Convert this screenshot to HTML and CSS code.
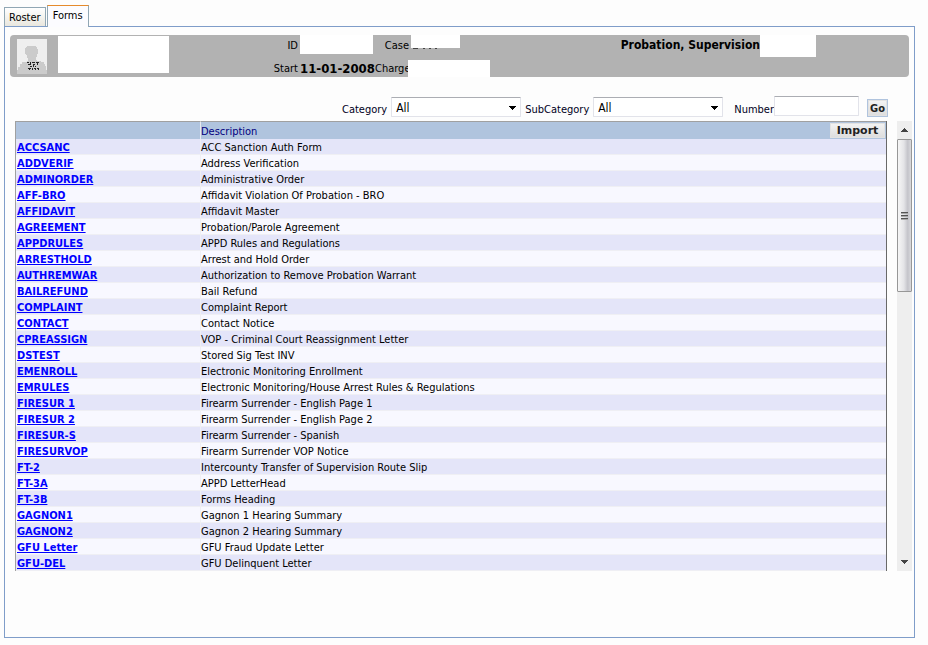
FILE: index.html
```
<!DOCTYPE html>
<html lang="en">

<head>
    <meta charset="utf-8">
    <title>Forms</title>
    <link rel="stylesheet" href="styles.css">
</head>

<body>
    <nav class="tabs">
        <a class="tab" href="#roster">Roster</a>
        <a class="tab active" href="#forms">Forms</a>
    </nav>
    <main class="panel">
        <header class="person">
            <svg class="photo" width="30" height="35" viewBox="0 0 30 35" shape-rendering="crispEdges">
                <rect width="30" height="35" fill="#efefef"/>
                <path d="M10 7h9v1h1v2h1v5h-1v3h-1v3h1v1h4v1h3v2h1v2h1v4h1v4H0v-4h1v-3h2v-3h2v-2h5v-1h1v-3h-1v-3H9v-1H8V9h1V8h1z" fill="#cbcbcb"/>
                <path d="M10 23h2v1h-2zM13 23h1v2h-1zM15 23h3v1h-3zM19 23h3v1h-3zM11 25h3v1h-3zM16 25h2v1h-2zM20 24h1v2h-1zM13 27h2v1h-2zM16 26h1v2h-1zM18 27h1v1h-1zM11 29h3v1h-3zM15 29h1v2h-1zM17 29h2v1h-2zM20 29h2v1h-2zM12 30h1v1h-1zM18 30h1v1h-1zM21 30h1v1h-1z" fill="#222"/>
            </svg>
            <div class="name"></div>
            <div class="info">
                <span class="label">ID</span>
                <span class="blank id-value"></span>
                <span class="label">Case</span>
                <span class="case-value">
                    <span class="blank case-blank"></span>
                    <svg width="30" height="2" viewBox="0 0 30 2" shape-rendering="crispEdges">
                        <path d="M2 0h5v1h-5zM12 0h2v1h-2zM18 0h2v1h-2zM24 0h2v1h-2z" fill="#444"/>
                    </svg>
                </span>
                <span class="label">Start</span>
                <strong class="date">11-01-2008</strong>
                <span class="label">Charge</span>
                <span class="blank charge-value"></span>
            </div>
            <div class="program">
                <strong>Probation, Supervision</strong>
                <span class="blank program-value"></span>
            </div>
        </header>

        <form class="filters">
            <label for="category">Category</label>
            <span class="select">
                <select id="category"><option>All</option></select>
                <svg width="7" height="4" viewBox="0 0 7 4" shape-rendering="crispEdges"><path d="M0 0h7v1H6v1H5v1H4v1H3V3H2V2H1V1H0z"/></svg>
            </span>
            <label for="subcategory">SubCategory</label>
            <span class="select">
                <select id="subcategory"><option>All</option></select>
                <svg width="7" height="4" viewBox="0 0 7 4" shape-rendering="crispEdges"><path d="M0 0h7v1H6v1H5v1H4v1H3V3H2V2H1V1H0z"/></svg>
            </span>
            <label class="number-label" for="number">Number</label>
            <input id="number" type="text">
            <button class="go" type="button">Go</button>
        </form>

        <div class="list">
            <table class="forms">
                <thead>
                    <tr><th class="code"></th><th class="description">Description</th><th class="action"><button class="import" type="button">Import</button></th></tr>
                </thead>
                <tbody>
                    <tr><td><a href="#">ACCSANC</a></td><td colspan="2">ACC Sanction Auth Form</td></tr>
                    <tr><td><a href="#">ADDVERIF</a></td><td colspan="2">Address Verification</td></tr>
                    <tr><td><a href="#">ADMINORDER</a></td><td colspan="2">Administrative Order</td></tr>
                    <tr><td><a href="#">AFF-BRO</a></td><td colspan="2">Affidavit Violation Of Probation - BRO</td></tr>
                    <tr><td><a href="#">AFFIDAVIT</a></td><td colspan="2">Affidavit Master</td></tr>
                    <tr><td><a href="#">AGREEMENT</a></td><td colspan="2">Probation/Parole Agreement</td></tr>
                    <tr><td><a href="#">APPDRULES</a></td><td colspan="2">APPD Rules and Regulations</td></tr>
                    <tr><td><a href="#">ARRESTHOLD</a></td><td colspan="2">Arrest and Hold Order</td></tr>
                    <tr><td><a href="#">AUTHREMWAR</a></td><td colspan="2">Authorization to Remove Probation Warrant</td></tr>
                    <tr><td><a href="#">BAILREFUND</a></td><td colspan="2">Bail Refund</td></tr>
                    <tr><td><a href="#">COMPLAINT</a></td><td colspan="2">Complaint Report</td></tr>
                    <tr><td><a href="#">CONTACT</a></td><td colspan="2">Contact Notice</td></tr>
                    <tr><td><a href="#">CPREASSIGN</a></td><td colspan="2">VOP - Criminal Court Reassignment Letter</td></tr>
                    <tr><td><a href="#">DSTEST</a></td><td colspan="2">Stored Sig Test INV</td></tr>
                    <tr><td><a href="#">EMENROLL</a></td><td colspan="2">Electronic Monitoring Enrollment</td></tr>
                    <tr><td><a href="#">EMRULES</a></td><td colspan="2">Electronic Monitoring/House Arrest Rules &amp; Regulations</td></tr>
                    <tr><td><a href="#">FIRESUR 1</a></td><td colspan="2">Firearm Surrender - English Page 1</td></tr>
                    <tr><td><a href="#">FIRESUR 2</a></td><td colspan="2">Firearm Surrender - English Page 2</td></tr>
                    <tr><td><a href="#">FIRESUR-S</a></td><td colspan="2">Firearm Surrender - Spanish</td></tr>
                    <tr><td><a href="#">FIRESURVOP</a></td><td colspan="2">Firearm Surrender VOP Notice</td></tr>
                    <tr><td><a href="#">FT-2</a></td><td colspan="2">Intercounty Transfer of Supervision Route Slip</td></tr>
                    <tr><td><a href="#">FT-3A</a></td><td colspan="2">APPD LetterHead</td></tr>
                    <tr><td><a href="#">FT-3B</a></td><td colspan="2">Forms Heading</td></tr>
                    <tr><td><a href="#">GAGNON1</a></td><td colspan="2">Gagnon 1 Hearing Summary</td></tr>
                    <tr><td><a href="#">GAGNON2</a></td><td colspan="2">Gagnon 2 Hearing Summary</td></tr>
                    <tr><td><a href="#">GFU Letter</a></td><td colspan="2">GFU Fraud Update Letter</td></tr>
                    <tr><td><a href="#">GFU-DEL</a></td><td colspan="2">GFU Delinquent Letter</td></tr>
                </tbody>
            </table>
            <div class="scrollbar">
                <button class="arrow" type="button" aria-label="Scroll up">
                    <svg width="7" height="4" viewBox="0 0 7 4" shape-rendering="crispEdges"><path d="M3 0h1v1h1v1h1v1h1v1H0V3h1V2h1V1h1z" fill="#444"/></svg>
                </button>
                <div class="thumb"><i></i><i></i><i></i></div>
                <button class="arrow down" type="button" aria-label="Scroll down">
                    <svg width="7" height="4" viewBox="0 0 7 4" shape-rendering="crispEdges"><path d="M0 0h7v1H6v1H5v1H4v1H3V3H2V2H1V1H0z" fill="#444"/></svg>
                </button>
            </div>
        </div>
    </main>
</body>

</html>
```
FILE: styles.css
```
* {
    box-sizing: border-box;
}

body {
    margin: 0;
    padding: 5px 13px 7px 4px;
    background-color: #fdfdfd;
    font-family: Tahoma, "DejaVu Sans Condensed", "DejaVu Sans", sans-serif;
    font-size: 11px;
    line-height: 14px;
    color: #000;
}

button, input, select {
    font-family: inherit;
    font-size: 11px;
    margin: 0;
    padding: 0;
}

svg {
    display: block;
}

.tabs {
    display: flex;
    align-items: flex-end;
    gap: 1px;
}

.tab {
    height: 19px;
    padding: 3px 4px;
    border: 1px solid #91a7b4;
    border-bottom: 0;
    background: linear-gradient(#fff, #e9e7de);
    color: #000;
    text-decoration: none;
}

.tab.active {
    height: 22px;
    padding: 3px 5px;
    margin-bottom: -1px;
    border-top-color: #e68b2c;
    background: #fcfcff;
    z-index: 1;
}

.panel {
    border: 1px solid #7f9dc9;
    padding: 8px 0 66px 5px;
}

.person {
    display: flex;
    align-items: center;
    height: 42px;
    margin-right: 5px;
    padding-left: 7px;
    border-radius: 4px;
    background-color: #b2b2b2;
}

.blank, .name {
    background-color: #fff;
}

.name {
    width: 111px;
    height: 37px;
    margin: 0 0 3px 11px;
}

.info {
    display: grid;
    grid-template-columns: 129px 73px 34px 79px;
    grid-template-rows: 21px 21px;
    column-gap: 2px;
    line-height: 21px;
}

.label {
    text-align: right;
}

.date {
    font-size: 13px;
    line-height: 26px;
    white-space: nowrap;
}

.info .label:nth-child(n+5) {
    line-height: 26px;
}

.id-value {
    height: 19px;
}

.case-blank {
    display: block;
    width: 49px;
    height: 13px;
}

.charge-value {
    height: 17px;
    margin-left: -3px;
    align-self: end;
}

.program {
    display: flex;
    align-self: flex-start;
    margin: 0 93px 0 auto;
    font-size: 12px;
    line-height: 20px;
    white-space: nowrap;
}

.program-value {
    width: 56px;
    height: 22px;
}

.filters {
    display: flex;
    align-items: flex-end;
    justify-content: flex-end;
    height: 40px;
    padding: 0 26px 0 0;
    color: #00001c;
}

.filters label {
    margin: 0 4px;
}

.filters .number-label {
    margin: 0 0 0 11px;
}

.select {
    position: relative;
}

.select svg {
    position: absolute;
    right: 5px;
    top: 9px;
    pointer-events: none;
}

select, input {
    display: block;
    height: 20px;
    border: 1px solid #e2e3ea;
    border-top-color: #abadb3;
    border-radius: 1px;
    background: #fff;
    color: #000;
}

select {
    appearance: none;
    width: 130px;
    padding: 1px 0 0 4px;
    font-size: 12px;
}

input {
    width: 85px;
    margin-bottom: 1px;
}

.go, .import {
    border: 1px solid #b0c4de;
    background: linear-gradient(#f4f4f4, #dcdcdc);
    box-shadow: inset 0 0 0 1px #e2e2e2;
    color: #222;
    font-weight: bold;
    white-space: nowrap;
}

.go {
    width: 21px;
    height: 18px;
    margin-left: 8px;
}

.list {
    display: flex;
    gap: 10px;
    margin: 4px 2px 0 5px;
}

.forms {
    flex: 1;
    border-collapse: separate;
    border-spacing: 0;
    table-layout: fixed;
    border: solid #696969;
    border-width: 0 1px;
    border-left-color: #a0a0a0;
}

.forms th {
    height: 18px;
    padding: 0;
    border-top: 1px solid #a0a0a0;
    background-color: #b0c4de;
    color: #000080;
    font-weight: normal;
    text-align: left;
}

.forms .code {
    width: 185px;
    border-right: 1px solid #e8eaf0;
}

.forms .description {
    padding-top: 2px;
}

.forms .action {
    width: 57px;
}

.import {
    display: block;
    width: 100%;
    height: 17px;
    font-family: Verdana, "DejaVu Sans", sans-serif;
}

.forms td {
    height: 16px;
    padding: 3px 0 0;
    border-bottom: 1px solid #efeff4;
    line-height: 12px;
}

.forms td:first-child {
    padding-left: 1px;
    border-right: 1px solid #efeff4;
}

.forms tbody tr {
    background-color: #f8f8ff;
}

.forms tbody tr:nth-child(odd) {
    background-color: #e4e5f9;
}

.forms a {
    color: #0000ff;
    font-weight: bold;
}

.scrollbar {
    display: flex;
    flex-direction: column;
    width: 15px;
    background-color: #eee;
}

.arrow {
    display: flex;
    align-items: center;
    justify-content: center;
    height: 18px;
    border: 0;
    background: transparent;
}

.arrow.down {
    margin-top: auto;
}

.thumb {
    display: flex;
    flex-direction: column;
    align-items: center;
    justify-content: center;
    gap: 1px;
    height: 153px;
    border: 1px solid #979797;
    border-radius: 1px;
    background: linear-gradient(to right, #f6f6f6, #e4e4e7 45%, #c4c4ca 75%, #d8d8dc);
}

.thumb i {
    width: 7px;
    height: 2px;
    border-top: 1px solid #555;
    background-color: #aaa;
}
```
